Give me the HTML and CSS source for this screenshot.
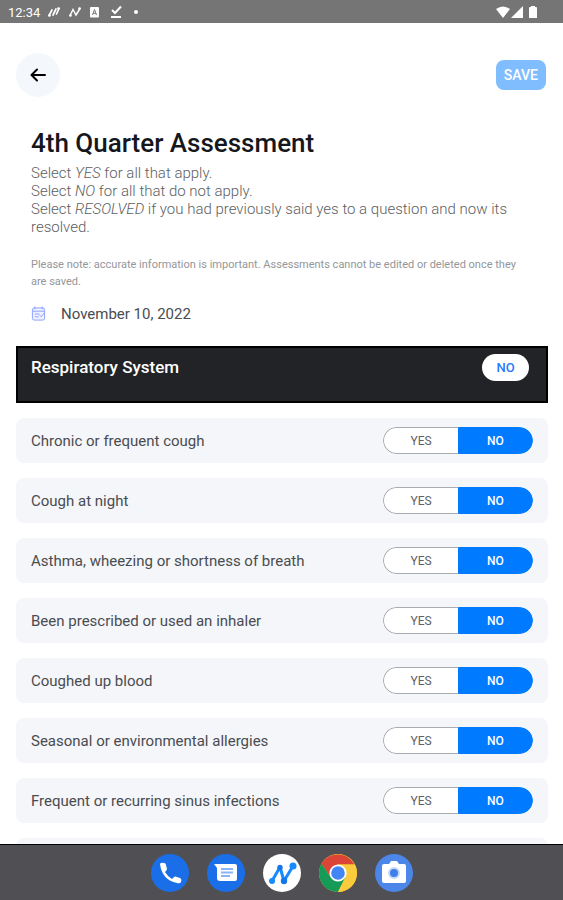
FILE: index.html
```html
<!DOCTYPE html>
<html lang="en">
<head>
  <meta charset="UTF-8" />
  <meta name="viewport" content="width=device-width, initial-scale=1.0" />
  <title>4th Quarter Assessment</title>
  <link rel="stylesheet" href="styles.css">
</head>
<body>
  <div class="status-bar">
    <span class="clock">12:34</span>
    <svg class="status-icon" viewBox="0 0 14 14"><path d="M2 10.500L5 5M6 10L9 4M9.500 9L12 3.500" stroke="#fff" stroke-width="1.700" fill="none" stroke-linecap="round"/><circle cx="2.500" cy="10.500" r="1.300" fill="#fff"/><circle cx="11.500" cy="3.500" r="1.300" fill="#fff"/></svg>
    <svg class="status-icon" viewBox="0 0 14 14"><path d="M2 10.500L5 4.500L8 10L12 3.500" stroke="#fff" stroke-width="1.500" fill="none" stroke-linecap="round"/><circle cx="2.500" cy="10.500" r="1.300" fill="#fff"/><circle cx="11.500" cy="3.500" r="1.300" fill="#fff"/></svg>
    <svg class="status-icon" viewBox="0 0 14 14"><rect x="1" y="2" width="9" height="10.500" rx="1" fill="#fff"/><path d="M3.500 10L5.500 4.500L7.500 10M4.200 8.300H6.800" stroke="#757575" fill="none"/></svg>
    <svg class="status-icon" viewBox="0 0 14 14"><path d="M2 5L5 8L11 1.500M1 12H11" stroke="#fff" stroke-width="2" fill="none"/></svg>
    <svg class="status-icon" viewBox="0 0 14 14"><circle cx="5" cy="7" r="2" fill="#fff"/></svg>
    <svg class="signals" viewBox="0 0 44 14"><path d="M1 4Q8 -1 15 4L8 13Z" fill="#fff"/><path d="M28 1V13H16Z" fill="#fff"/><path d="M36 1H40V2H41Q42 2 42 3V13H34V3Q34 2 35 2H36Z" fill="#fff"/></svg>
  </div>

  <main class="screen">
    <div class="toolbar">
      <button class="back-btn" aria-label="Back">
        <svg viewBox="0 0 18 18"><path d="M16 9H3M8 3.500L2.500 9L8 14.500" fill="none" stroke="#000" stroke-width="2" stroke-linecap="round" stroke-linejoin="round"/></svg>
      </button>
      <button class="save-btn">SAVE</button>
    </div>

    <div class="intro">
      <h1>4th Quarter Assessment</h1>
      <p class="help">Select <em>YES</em> for all that apply.<br>
        Select <em>NO</em> for all that do not apply.<br>
        Select <em>RESOLVED</em> if you had previously said yes to a question and now its resolved.</p>
      <p class="note">Please note: accurate information is important. Assessments cannot be edited or deleted once they are saved.</p>
      <div class="date">
        <svg viewBox="0 0 16 16"><rect x="1.500" y="1.500" width="13" height="13" rx="2" fill="#eef1ff" stroke="#8c9eff"/><path d="M4 0V3M12 0V3M2 5H14M4 8H9M4 11H8M9 9L11 11L14 7" fill="none" stroke="#8c9eff"/></svg>
        <span>November 10, 2022</span>
      </div>
    </div>

    <div class="section-header">
      <h2>Respiratory System</h2>
      <button class="section-btn">NO</button>
    </div>

    <div class="questions">
      <fieldset class="question">
        <legend>Chronic or frequent cough</legend>
        <div class="toggle">
          <label><input type="radio" name="cough" value="yes"><span>YES</span></label>
          <label><input type="radio" name="cough" value="no" checked><span>NO</span></label>
        </div>
      </fieldset>
      <fieldset class="question">
        <legend>Cough at night</legend>
        <div class="toggle">
          <label><input type="radio" name="night" value="yes"><span>YES</span></label>
          <label><input type="radio" name="night" value="no" checked><span>NO</span></label>
        </div>
      </fieldset>
      <fieldset class="question">
        <legend>Asthma, wheezing or shortness of breath</legend>
        <div class="toggle">
          <label><input type="radio" name="asthma" value="yes"><span>YES</span></label>
          <label><input type="radio" name="asthma" value="no" checked><span>NO</span></label>
        </div>
      </fieldset>
      <fieldset class="question">
        <legend>Been prescribed or used an inhaler</legend>
        <div class="toggle">
          <label><input type="radio" name="inhaler" value="yes"><span>YES</span></label>
          <label><input type="radio" name="inhaler" value="no" checked><span>NO</span></label>
        </div>
      </fieldset>
      <fieldset class="question">
        <legend>Coughed up blood</legend>
        <div class="toggle">
          <label><input type="radio" name="blood" value="yes"><span>YES</span></label>
          <label><input type="radio" name="blood" value="no" checked><span>NO</span></label>
        </div>
      </fieldset>
      <fieldset class="question">
        <legend>Seasonal or environmental allergies</legend>
        <div class="toggle">
          <label><input type="radio" name="allergies" value="yes"><span>YES</span></label>
          <label><input type="radio" name="allergies" value="no" checked><span>NO</span></label>
        </div>
      </fieldset>
      <fieldset class="question">
        <legend>Frequent or recurring sinus infections</legend>
        <div class="toggle">
          <label><input type="radio" name="sinus" value="yes"><span>YES</span></label>
          <label><input type="radio" name="sinus" value="no" checked><span>NO</span></label>
        </div>
      </fieldset>
      <div class="question"></div>
    </div>
  </main>

  <nav class="dock">
    <a href="#" aria-label="Phone">
      <svg viewBox="0 0 38 38"><circle cx="19" cy="19" r="19" fill="#1a6fe8"/><path d="M9 10Q10 8 13 9Q15 9 15 11L16 15Q16 16 14 18Q17 23 21 25L23 23Q24 22 26 23L29 24Q31 25 30 28Q29 30 26 29Q11 26 9 10Z" fill="#fff"/></svg>
    </a>
    <a href="#" aria-label="Messages">
      <svg viewBox="0 0 38 38"><circle cx="19" cy="19" r="19" fill="#1a6fe8"/><path d="M7 10H28Q30 10 30 12V25Q30 27 28 27H13Q10 27 10 24V14Z" fill="#fff"/><path d="M14 15H26M14 18.500H26M14 22H23" stroke="#8ab4f8" stroke-width="2"/></svg>
    </a>
    <a href="#" aria-label="Assessments">
      <svg viewBox="0 0 38 38"><circle cx="19" cy="19" r="19" fill="#fff"/><path d="M9 27L17 13L21 27L30 12" fill="none" stroke="#168bff" stroke-width="3" stroke-linejoin="round"/><circle cx="9" cy="27" r="3" fill="#168bff"/><circle cx="17" cy="13.500" r="2.700" fill="#1476e8"/><circle cx="21" cy="27" r="3.200" fill="#1476e8"/><circle cx="30" cy="12" r="3.500" fill="#168bff"/></svg>
    </a>
    <a href="#" aria-label="Chrome">
      <svg viewBox="0 0 38 38"><circle cx="19" cy="19" r="19" fill="#fbc02d"/><path d="M19 19L11.600 23.300L2.550 9.500A19 19 0 0 1 35.400 10.400L19 10.400Z" fill="#db4437"/><path d="M2.550 9.500A19 19 0 0 0 19 38L26.400 23.300L11.600 23.300Z" fill="#159a57"/><path d="M19 10.400H35.900A19 19 0 0 1 19 38L26.400 23.300Z" fill="#fccb3d"/><circle cx="19" cy="19" r="8.600" fill="#fff"/><circle cx="19" cy="19" r="6.800" fill="#4285f4"/></svg>
    </a>
    <a href="#" aria-label="Camera">
      <svg viewBox="0 0 38 38"><circle cx="19" cy="19" r="19" fill="#4b86e8"/><path d="M9 10H14L16 7H22L24 10H29Q31 10 31 12V27Q31 29 29 29H9Q7 29 7 27V12Q7 10 9 10Z" fill="#fff"/><circle cx="19" cy="19" r="6" fill="#c6d9fa"/><circle cx="19" cy="19" r="4" fill="#3d7ee8"/></svg>
    </a>
  </nav>
</body>
</html>
```

FILE: styles.css
```css
* {
  box-sizing: border-box;
}
body {
  display: flex;
  flex-direction: column;
  height: 100vh;
  margin: 0;
  font-family: Roboto, sans-serif;
  font-size: 15px;
  color: #4a4c50;
  background-color: #fff;
}
button {
  border: none;
  font-family: inherit;
  font-size: 13px;
  font-weight: 500;
  cursor: pointer;
}
.status-bar {
  display: flex;
  align-items: center;
  flex: none;
  height: 23px;
  gap: 7px;
  padding: 1px 24px 0 8px;
  background-color: #757575;
  color: #fff;
}
.clock {
  font-size: 13px;
}
.status-icon {
  width: 14px;
  height: 14px;
}
.signals {
  width: 44px;
  height: 14px;
  margin-left: auto;
}
.screen {
  flex: 1;
  min-height: 0;
  overflow: hidden;
  padding: 30px 15px 0 16px;
}
.toolbar {
  display: flex;
  align-items: center;
  justify-content: space-between;
}
.back-btn {
  display: flex;
  align-items: center;
  justify-content: center;
  width: 44px;
  height: 44px;
  padding: 0;
  border-radius: 50%;
  background-color: #f4f7fb;
}
.back-btn svg {
  width: 18px;
  height: 18px;
}
.save-btn {
  height: 30px;
  margin-right: 2px;
  padding: 0 8px;
  border-radius: 8px;
  background-color: #80bdff;
  color: #fff;
  font-size: 14px;
}
.intro {
  padding: 30px 15px 0;
}
h1 {
  margin: 0;
  font-size: 26px;
  font-weight: 500;
  line-height: 32px;
  color: #16171c;
}
.help {
  margin: 5px 0 0;
  font-weight: 300;
  line-height: 18px;
  color: #5c5e62;
}
.note {
  margin: 20px 0 0;
  font-size: 11px;
  line-height: 17px;
  color: #94969a;
}
.date {
  display: flex;
  align-items: center;
  gap: 15px;
  margin-top: 15px;
  line-height: 18px;
}
.date svg {
  width: 15px;
  height: 16px;
}
.section-header {
  display: flex;
  align-items: flex-start;
  justify-content: space-between;
  height: 57px;
  margin-top: 23px;
  padding: 6px 17px 0 13px;
  border: 2px solid #000;
  background-color: #222326;
}
h2 {
  margin: 0;
  font-size: 17px;
  font-weight: 500;
  line-height: 26px;
  color: #fff;
}
.section-btn {
  width: 47px;
  height: 27px;
  padding: 0;
  border-radius: 14px;
  background-color: #fff;
  color: #2979ff;
}
.questions {
  display: grid;
  gap: 15px;
  margin-top: 15px;
}
.question {
  display: flex;
  align-items: center;
  justify-content: space-between;
  min-width: 0;
  height: 45px;
  margin: 0;
  padding: 0 15px;
  border: none;
  border-radius: 8px;
  background-color: #f4f6fa;
}
.question legend {
  float: left;
  padding: 0;
}
.toggle {
  display: flex;
  width: 150px;
  height: 27px;
  margin-left: auto;
  border-radius: 14px;
  overflow: hidden;
}
.toggle label {
  flex: 1;
  cursor: pointer;
}
.toggle input {
  position: absolute;
  opacity: 0;
}
.toggle span {
  display: block;
  height: 27px;
  border: 1px solid #a8abaf;
  border-right: none;
  border-radius: 14px 0 0 14px;
  background-color: #fff;
  color: #606266;
  font-size: 12px;
  line-height: 26px;
  text-align: center;
}
.toggle label + label span {
  border: 1px solid #a8abaf;
  border-radius: 0 14px 14px 0;
}
.toggle input:checked + span,
.toggle label + label input:checked + span {
  border-color: #007bff;
  background-color: #007bff;
  color: #fff;
  font-weight: 500;
}
.dock {
  display: flex;
  align-items: center;
  justify-content: center;
  flex: none;
  gap: 18px;
  height: 56px;
  border-top: 1px solid #000;
  background-color: #505054;
}
.dock a,
.dock svg {
  display: block;
  width: 38px;
  height: 38px;
}
```
